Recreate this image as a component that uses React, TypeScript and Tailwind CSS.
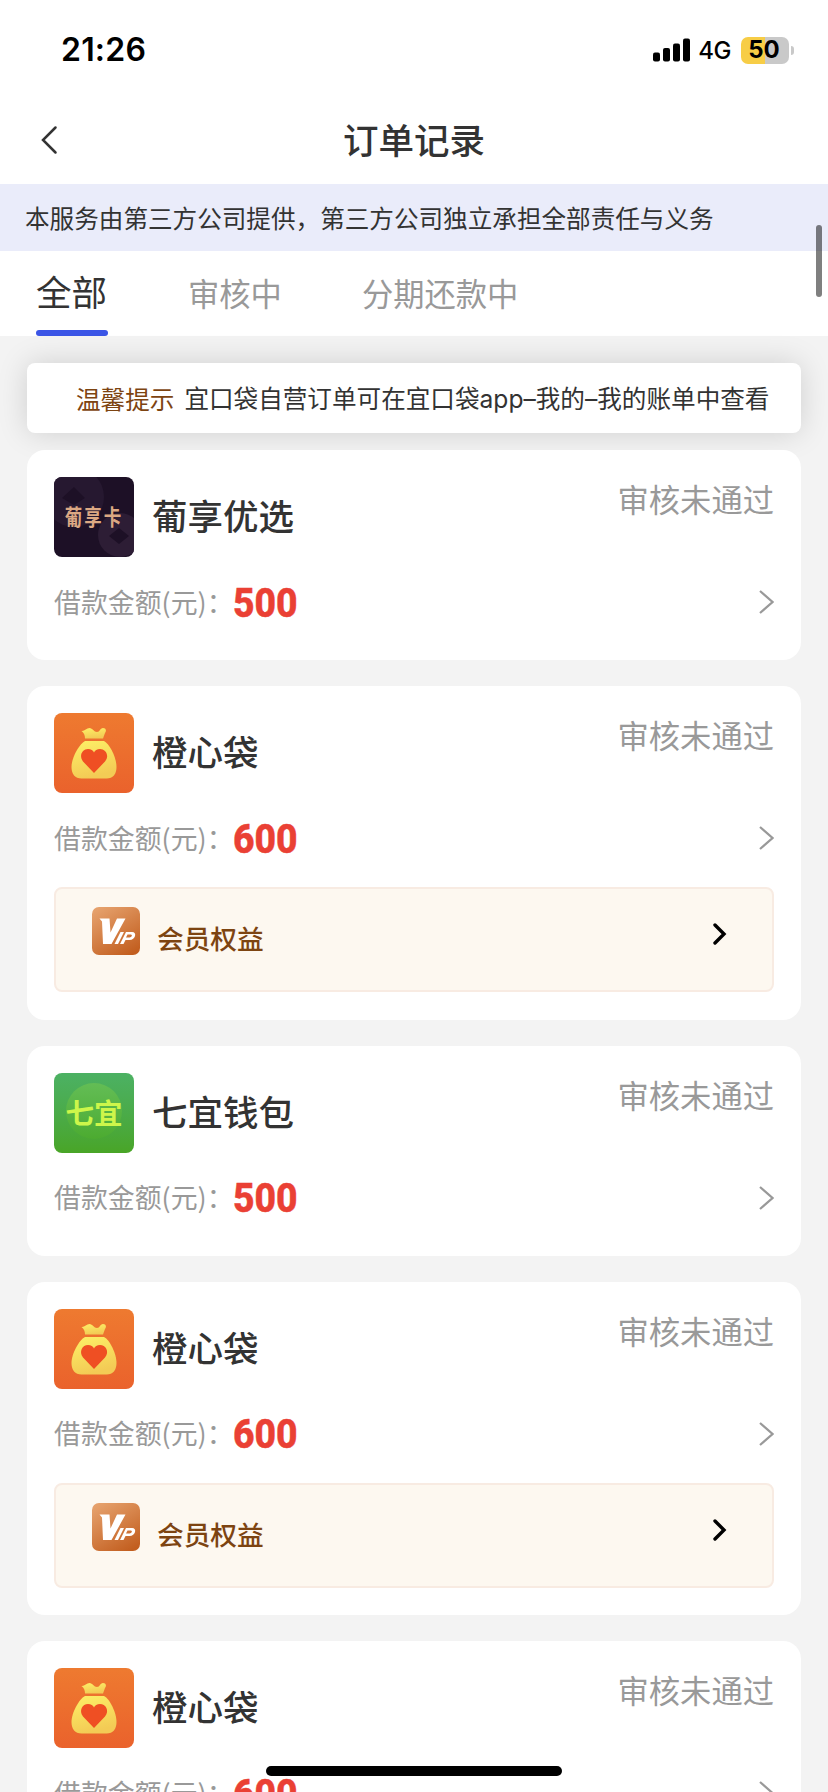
import type { ReactNode } from "react";

type Brand = "puxiang" | "chengxin" | "qiyi";

interface OrderProps {
  id: number;
  brand: Brand;
  name: string;
  status: string;
  amount: number;
  hasBenefit: boolean;
}

const tabs = ["全部", "审核中", "分期还款中"];

const orders: OrderProps[] = [
  { id: 1, brand: "puxiang", name: "葡享优选", status: "审核未通过", amount: 500, hasBenefit: false },
  { id: 2, brand: "chengxin", name: "橙心袋", status: "审核未通过", amount: 600, hasBenefit: true },
  { id: 3, brand: "qiyi", name: "七宜钱包", status: "审核未通过", amount: 500, hasBenefit: false },
  { id: 4, brand: "chengxin", name: "橙心袋", status: "审核未通过", amount: 600, hasBenefit: true },
  { id: 5, brand: "chengxin", name: "橙心袋", status: "审核未通过", amount: 600, hasBenefit: true },
];

function StatusBar() {
  return (
    <div className="flex h-[100px] items-center justify-between pl-[61px] pr-[34px] font-['Inter',sans-serif] text-black">
      <span className="text-[32px] leading-none font-semibold tracking-[0.2px]">21:26</span>
      <div className="flex items-center">
        <svg width="38" height="24" viewBox="0 0 38 24">
          <rect x="0" y="14.5" width="7" height="9" rx="2" />
          <rect x="10" y="10" width="7" height="13.5" rx="2" />
          <rect x="20" y="5.5" width="7" height="18" rx="2" />
          <rect x="30" y="0.5" width="7" height="23" rx="2" />
        </svg>
        <span className="ml-[7px] pt-[2px] text-[24px] leading-none font-medium tracking-[-0.5px]">4G</span>
        <div className="ml-[10px] flex h-[27px] w-12 items-center justify-center rounded-[7px] bg-[linear-gradient(90deg,#f7cd46_50%,#c9c9c9_50%)]">
          <span className="pr-[2px] text-[24px] leading-none font-bold">50</span>
        </div>
        <div className="ml-[2px] h-[9px] w-[3px] rounded-r-full bg-[#c9c9c9]" />
      </div>
    </div>
  );
}

function Header() {
  return (
    <header className="grid h-[84px] grid-cols-[100px_1fr_100px] items-center pb-[5px]">
      <svg className="ml-10" width="20" height="30" viewBox="0 0 20 30" fill="none" stroke="#333" strokeWidth="2.5" strokeLinecap="round">
        <path d="M15.500 2.500L3 15l12.500 12.500" />
      </svg>
      <h1 className="pb-[2px] text-center text-[35.5px] leading-none font-medium">订单记录</h1>
    </header>
  );
}

function Tabs() {
  return (
    <nav className="flex h-[85px] shrink-0 items-stretch bg-white pl-9">
      {tabs.map((tab, index) =>
        index === 0 ? (
          <div key={tab} className="mr-[80px] flex w-[72px] flex-col justify-between">
            <span className="pt-5 text-[35.5px] leading-[40px]">{tab}</span>
            <span className="h-[6px] rounded-full bg-[#3b55e6]" />
          </div>
        ) : (
          <span key={tab} className="mr-20 pt-[22px] text-[31.3px] leading-[40px] text-[#999]">
            {tab}
          </span>
        ),
      )}
    </nav>
  );
}

function PuxiangLogo() {
  return (
    <div className="relative flex size-20 items-center justify-center overflow-hidden rounded-lg bg-[#1d1026]">
      <svg className="absolute inset-0" width="80" height="80" viewBox="0 0 80 80">
        <circle cx="20" cy="20" r="30" fill="#261830" />
        <path d="M20 10l11 11-11 7-12-7z" fill="#1d1026" />
        <circle cx="66" cy="58" r="22" fill="#2d1d35" />
        <path d="M65 51l10 8-10 8-10-8z" fill="#1d1026" />
      </svg>
      <span className="relative scale-y-125 pb-[2px] text-[17.5px] leading-none font-bold tracking-[2px] text-[#dca883]">葡享卡</span>
    </div>
  );
}

function ChengxinLogo() {
  return (
    <svg className="rounded-lg" width="80" height="80" viewBox="0 0 80 80">
      <defs>
        <linearGradient id="orangeBg" x1="0" y1="0" x2="0" y2="1">
          <stop offset="0" stopColor="#ee7a30" />
          <stop offset="1" stopColor="#ea622c" />
        </linearGradient>
        <linearGradient id="bagFill" x1="0" y1="0" x2="0.3" y2="1">
          <stop offset="0" stopColor="#fdf067" />
          <stop offset="1" stopColor="#f3cb55" />
        </linearGradient>
      </defs>
      <rect width="80" height="80" fill="url(#orangeBg)" />
      <path d="M27.500 18c3 .5 5-3 8-3s4.500 4 7.500 4 3-4 6-4c3.500 0 3.500 3.500 2 5l-2 5.500H31c0-3.500-1-5.500-3.500-7.500z" fill="url(#bagFill)" />
      <path d="M31 28h19c6 3 12.500 17 12.500 26 0 7-3.500 11.500-10 11.500h-25c-6.500 0-10-4.500-10-11.500 0-9 7.500-23 13.500-26z" fill="url(#bagFill)" />
      <path d="M40 60L29 48.500c-4.500-6-.5-12.500 5-12.500 3 0 5 1.500 6 3.500 1-2 3-3.500 6-3.500 5.500 0 10 6.500 5 12.500z" fill="#ef4f23" />
    </svg>
  );
}

function QiyiLogo() {
  return (
    <div className="relative flex size-20 items-center justify-center overflow-hidden rounded-lg bg-linear-to-b from-[#4cb163] to-[#49a526]">
      <div className="absolute top-[10px] left-3 size-14 rounded-full bg-linear-to-b from-[#63bd55] to-[#4cab30]" />
      <span className="relative text-[28.5px] leading-none font-bold text-[#cdf64a]">七宜</span>
    </div>
  );
}

const logos: Record<Brand, ReactNode> = {
  puxiang: <PuxiangLogo />,
  chengxin: <ChengxinLogo />,
  qiyi: <QiyiLogo />,
};

function VipIcon() {
  return (
    <svg width="48" height="48" viewBox="0 0 48 48">
      <defs>
        <linearGradient id="vipBg" x1="0.2" y1="0" x2="0.8" y2="1">
          <stop offset="0" stopColor="#e5a06b" />
          <stop offset="1" stopColor="#c25e1f" />
        </linearGradient>
      </defs>
      <rect width="48" height="48" rx="7" fill="url(#vipBg)" />
      <path d="M7.500 11.500h10l1 14L25 11.500h8.500L19.500 37h-8.500L10 14.500z" fill="#fff" />
      <path d="M28.500 25h3.500l-6 12h-3.500z" fill="#fff" />
      <path d="M34 25h6c5.500 0 3.500 8-2.500 8h-4l-2 4H28zM35.500 27.500l-1.500 3h3.500c2.300 0 3.300-3 1.300-3z" fill="#fff" fillRule="evenodd" />
    </svg>
  );
}

function Benefit() {
  return (
    <div className="mt-[29px] flex h-[105px] items-start rounded-lg border-2 border-[#f8ebe2] bg-[#fdf8f0] pt-[18px] pl-9">
      <VipIcon />
      <span className="mt-[11px] ml-[17px] text-[26.7px] leading-[40px] font-medium text-[#7d4411]">会员权益</span>
      <svg className="mt-[15px] mr-[45px] ml-auto" width="14" height="24" viewBox="0 0 14 24" fill="none" stroke="#000" strokeWidth="3.4" strokeLinecap="round">
        <path d="M2 3l9 9-9 9" />
      </svg>
    </div>
  );
}

function OrderCard({ order }: { order: OrderProps }) {
  return (
    <section className={`shrink-0 rounded-[18px] bg-white px-[27px] pt-[27px] ${order.hasBenefit ? "h-[333.5px]" : "h-[210px]"}`}>
      <div className="flex h-20 items-start">
        {logos[order.brand]}
        <h2 className="mt-[18px] ml-[18px] text-[35.5px] leading-[40px] font-medium">{order.name}</h2>
        <span className="mt-[2px] ml-auto text-[31.3px] leading-[40px] text-[#999]">{order.status}</span>
      </div>
      <div className="mt-[25px] flex h-10 items-center">
        <span className="w-[179px] text-[26.9px] leading-none whitespace-nowrap text-[#999]">借款金额(元)：</span>
        <span className="origin-left scale-x-90 pt-px font-['Roboto',sans-serif] text-[41.5px] leading-none font-extrabold text-[#ea4034] [-webkit-text-stroke:0.5px_#ea4034]">
          {order.amount}
        </span>
        <svg className="ml-auto" width="16" height="26" viewBox="0 0 16 26" fill="none" stroke="#999" strokeWidth="2.2">
          <path d="M2 2l12.500 11L2 24" />
        </svg>
      </div>
      {order.hasBenefit && <Benefit />}
    </section>
  );
}

export default function App() {
  return (
    <div className="relative flex h-[1792px] w-[828px] flex-col overflow-hidden bg-[#f3f3f3] font-['Noto_Sans_CJK_SC',sans-serif] text-[#333]">
      <div className="shrink-0 bg-white">
        <StatusBar />
        <Header />
      </div>
      <p className="flex h-[67px] shrink-0 items-center bg-[#eaecfa] pl-[25px] text-[24.6px] leading-none whitespace-nowrap">
        本服务由第三方公司提供，第三方公司独立承担全部责任与义务
      </p>
      <Tabs />
      <main className="flex flex-col px-[27px] pt-[27px]">
        <div className="mb-[17px] flex h-[70px] shrink-0 items-center rounded-lg bg-white pl-[49px] text-[24.6px] leading-none whitespace-nowrap shadow-[0_0_30px_rgba(0,0,0,0.15)]">
          <span className="text-[#7d4411]">温馨提示</span>
          <span className="ml-[10px]">宜口袋自营订单可在宜口袋<span className="font-['Inter',sans-serif]">app–</span>我的<span className="font-['Inter',sans-serif]">–</span>我的账单中查看</span>
        </div>
        <div className="flex flex-col gap-[26px]">
          {orders.map((order) => (
            <OrderCard key={order.id} order={order} />
          ))}
        </div>
      </main>
      <div className="absolute top-[225px] right-[6px] h-[72px] w-[6px] rounded-full bg-black/50" />
      <div className="absolute bottom-4 left-[266px] h-[10px] w-[296px] rounded-full bg-black" />
    </div>
  );
}
